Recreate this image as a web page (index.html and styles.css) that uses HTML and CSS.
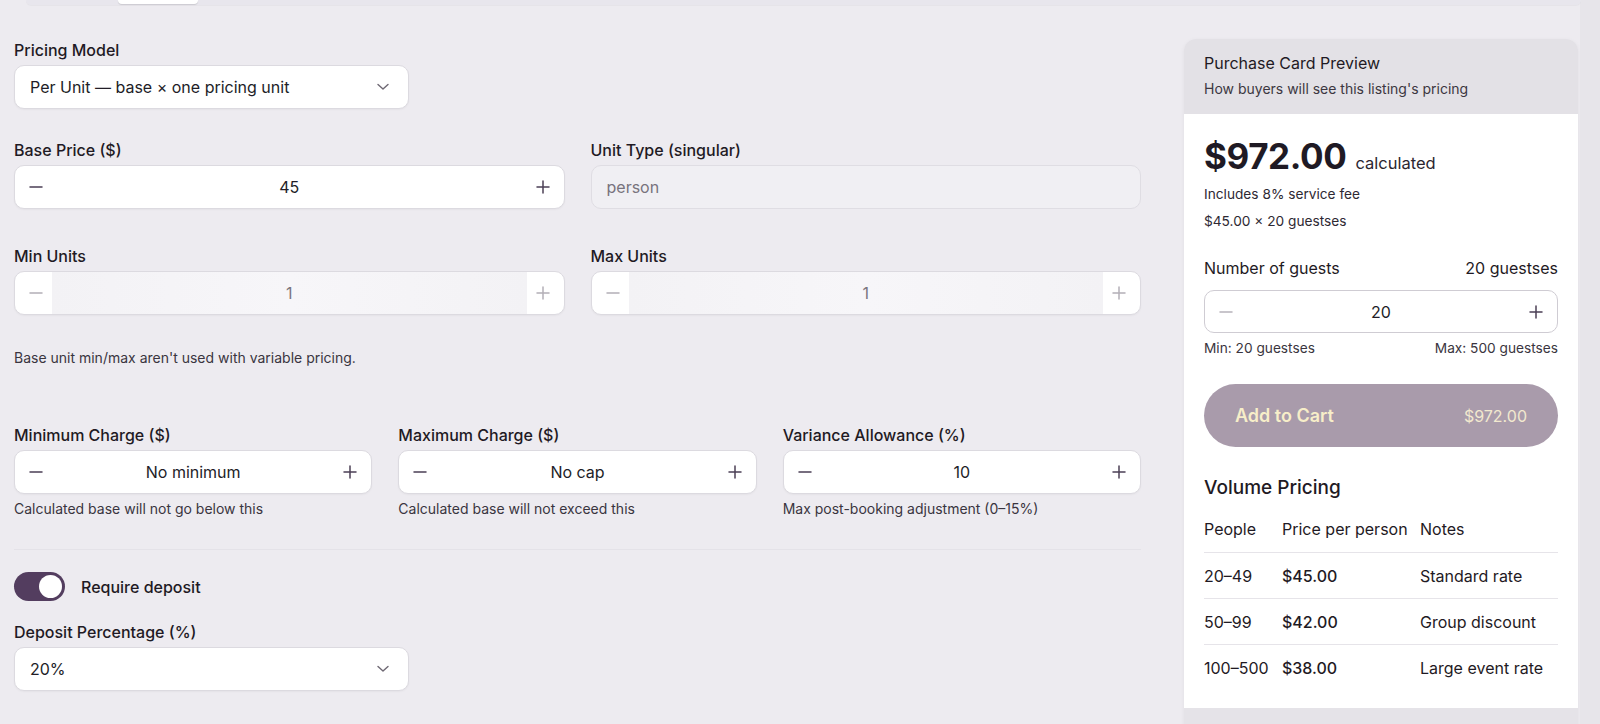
FILE: index.html
```html
<!DOCTYPE html>
<html lang="en">
<head>
    <meta charset="UTF-8">
    <meta name="viewport" content="width=device-width, initial-scale=1.0">
    <title>Pricing</title>
    <link rel="stylesheet" href="styles.css">
</head>
<body>
    <div class="page">
        <main class="editor">
            <div class="tabbar"><span class="tab-active"></span></div>

            <div class="field row-first">
                <label>Pricing Model</label>
                <div class="select">
                    <span>Per Unit — base × one pricing unit</span>
                    <svg class="chevron" width="12" height="8" viewBox="0 0 12 8"><polyline points="1,1.5 6,6 11,1.5" fill="none" stroke="#6e6873" stroke-width="1.4" stroke-linecap="round" stroke-linejoin="round"/></svg>
                </div>
            </div>

            <div class="grid-2 row-second">
                <div class="field">
                    <label>Base Price ($)</label>
                    <div class="stepper">
                        <button class="step"><svg width="14" height="14" viewBox="0 0 14 14"><line x1="1" y1="7" x2="13" y2="7" stroke="currentColor" stroke-width="1.5" stroke-linecap="round"/></svg></button>
                        <span class="value">45</span>
                        <button class="step"><svg width="14" height="14" viewBox="0 0 14 14"><line x1="1" y1="7" x2="13" y2="7" stroke="currentColor" stroke-width="1.5" stroke-linecap="round"/><line x1="7" y1="1" x2="7" y2="13" stroke="currentColor" stroke-width="1.5" stroke-linecap="round"/></svg></button>
                    </div>
                </div>
                <div class="field">
                    <label>Unit Type (singular)</label>
                    <div class="text-input disabled">person</div>
                </div>
            </div>

            <div class="grid-2 row-third">
                <div class="field">
                    <label>Min Units</label>
                    <div class="stepper disabled">
                        <button class="step"><svg width="14" height="14" viewBox="0 0 14 14"><line x1="1" y1="7" x2="13" y2="7" stroke="currentColor" stroke-width="1.5" stroke-linecap="round"/></svg></button>
                        <span class="value">1</span>
                        <button class="step"><svg width="14" height="14" viewBox="0 0 14 14"><line x1="1" y1="7" x2="13" y2="7" stroke="currentColor" stroke-width="1.5" stroke-linecap="round"/><line x1="7" y1="1" x2="7" y2="13" stroke="currentColor" stroke-width="1.5" stroke-linecap="round"/></svg></button>
                    </div>
                </div>
                <div class="field">
                    <label>Max Units</label>
                    <div class="stepper disabled">
                        <button class="step"><svg width="14" height="14" viewBox="0 0 14 14"><line x1="1" y1="7" x2="13" y2="7" stroke="currentColor" stroke-width="1.5" stroke-linecap="round"/></svg></button>
                        <span class="value">1</span>
                        <button class="step"><svg width="14" height="14" viewBox="0 0 14 14"><line x1="1" y1="7" x2="13" y2="7" stroke="currentColor" stroke-width="1.5" stroke-linecap="round"/><line x1="7" y1="1" x2="7" y2="13" stroke="currentColor" stroke-width="1.5" stroke-linecap="round"/></svg></button>
                    </div>
                </div>
            </div>

            <p class="note">Base unit min/max aren't used with variable pricing.</p>

            <div class="grid-3 row-charges">
                <div class="field">
                    <label>Minimum Charge ($)</label>
                    <div class="stepper">
                        <button class="step"><svg width="14" height="14" viewBox="0 0 14 14"><line x1="1" y1="7" x2="13" y2="7" stroke="currentColor" stroke-width="1.5" stroke-linecap="round"/></svg></button>
                        <span class="value">No minimum</span>
                        <button class="step"><svg width="14" height="14" viewBox="0 0 14 14"><line x1="1" y1="7" x2="13" y2="7" stroke="currentColor" stroke-width="1.5" stroke-linecap="round"/><line x1="7" y1="1" x2="7" y2="13" stroke="currentColor" stroke-width="1.5" stroke-linecap="round"/></svg></button>
                    </div>
                    <p class="help">Calculated base will not go below this</p>
                </div>
                <div class="field">
                    <label>Maximum Charge ($)</label>
                    <div class="stepper">
                        <button class="step"><svg width="14" height="14" viewBox="0 0 14 14"><line x1="1" y1="7" x2="13" y2="7" stroke="currentColor" stroke-width="1.5" stroke-linecap="round"/></svg></button>
                        <span class="value">No cap</span>
                        <button class="step"><svg width="14" height="14" viewBox="0 0 14 14"><line x1="1" y1="7" x2="13" y2="7" stroke="currentColor" stroke-width="1.5" stroke-linecap="round"/><line x1="7" y1="1" x2="7" y2="13" stroke="currentColor" stroke-width="1.5" stroke-linecap="round"/></svg></button>
                    </div>
                    <p class="help">Calculated base will not exceed this</p>
                </div>
                <div class="field">
                    <label>Variance Allowance (%)</label>
                    <div class="stepper">
                        <button class="step"><svg width="14" height="14" viewBox="0 0 14 14"><line x1="1" y1="7" x2="13" y2="7" stroke="currentColor" stroke-width="1.5" stroke-linecap="round"/></svg></button>
                        <span class="value">10</span>
                        <button class="step"><svg width="14" height="14" viewBox="0 0 14 14"><line x1="1" y1="7" x2="13" y2="7" stroke="currentColor" stroke-width="1.5" stroke-linecap="round"/><line x1="7" y1="1" x2="7" y2="13" stroke="currentColor" stroke-width="1.5" stroke-linecap="round"/></svg></button>
                    </div>
                    <p class="help">Max post-booking adjustment (0–15%)</p>
                </div>
            </div>

            <hr class="divider">

            <div class="toggle-row">
                <span class="toggle on"><span class="knob"></span></span>
                <span class="toggle-label">Require deposit</span>
            </div>

            <div class="field row-deposit">
                <label>Deposit Percentage (%)</label>
                <div class="select">
                    <span>20%</span>
                    <svg class="chevron" width="12" height="8" viewBox="0 0 12 8"><polyline points="1,1.5 6,6 11,1.5" fill="none" stroke="#6e6873" stroke-width="1.4" stroke-linecap="round" stroke-linejoin="round"/></svg>
                </div>
            </div>
        </main>

        <aside class="preview">
            <div class="card">
                <div class="card-header">
                    <div class="card-title">Purchase Card Preview</div>
                    <div class="card-subtitle">How buyers will see this listing's pricing</div>
                </div>
                <div class="card-body">
                    <div class="price-line">
                        <span class="price">$972.00</span>
                        <span class="price-tag">calculated</span>
                    </div>
                    <div class="fine">Includes 8% service fee</div>
                    <div class="fine second">$45.00 × 20 guestses</div>

                    <div class="guests-head">
                        <span>Number of guests</span>
                        <span>20 guestses</span>
                    </div>
                    <div class="stepper compact">
                        <button class="step muted"><svg width="14" height="14" viewBox="0 0 14 14"><line x1="1" y1="7" x2="13" y2="7" stroke="currentColor" stroke-width="1.5" stroke-linecap="round"/></svg></button>
                        <span class="value">20</span>
                        <button class="step"><svg width="14" height="14" viewBox="0 0 14 14"><line x1="1" y1="7" x2="13" y2="7" stroke="currentColor" stroke-width="1.5" stroke-linecap="round"/><line x1="7" y1="1" x2="7" y2="13" stroke="currentColor" stroke-width="1.5" stroke-linecap="round"/></svg></button>
                    </div>
                    <div class="limits">
                        <span>Min: 20 guestses</span>
                        <span>Max: 500 guestses</span>
                    </div>

                    <button class="cart-btn">
                        <span class="cart-label">Add to Cart</span>
                        <span class="cart-price">$972.00</span>
                    </button>

                    <h3 class="volume-title">Volume Pricing</h3>
                    <table class="volume">
                        <thead>
                            <tr><th class="c-people">People</th><th class="c-price">Price per person</th><th>Notes</th></tr>
                        </thead>
                        <tbody>
                            <tr><td>20–49</td><td class="amount">$45.00</td><td>Standard rate</td></tr>
                            <tr><td>50–99</td><td class="amount">$42.00</td><td>Group discount</td></tr>
                            <tr><td>100–500</td><td class="amount">$38.00</td><td>Large event rate</td></tr>
                        </tbody>
                    </table>
                </div>
                <div class="card-footer"></div>
            </div>
        </aside>

        <div class="rail"></div>
    </div>
</body>
</html>
```

FILE: styles.css
```css
body {
    margin: 0;
    font-family: Inter, "Noto Sans", sans-serif;
    background-color: #edebf0;
    color: #1f1a24;
    height: 724px;
    overflow: hidden;
}
.page {
    display: flex;
    padding-left: 14px;
}
.editor {
    flex: 1;
    min-width: 0;
}
.tabbar {
    height: 5px;
    margin-left: 12px;
    margin-right: -440px;
    background-color: #e8e6ed;
    border-radius: 0 0 8px 8px;
    box-shadow: 0 1px 1px rgba(0, 0, 0, 0.03);
    position: relative;
}
.tab-active {
    position: absolute;
    left: 92px;
    top: 0;
    width: 80px;
    height: 4px;
    background-color: #ffffff;
    border-radius: 0 0 8px 8px;
    box-shadow: 0 1px 1px rgba(0, 0, 0, 0.12);
}
.preview {
    width: 394px;
    margin-left: 43px;
    padding-top: 39px;
}
.rail {
    width: 20px;
    margin-left: 2px;
    height: 724px;
    background-color: #e7e5ea;
}

/* fields */
.field label {
    display: block;
    font-size: 16px;
    font-weight: 500;
    line-height: 20px;
    margin-bottom: 5px;
    color: #1f1a24;
}
.row-first {
    margin-top: 35px;
}
.row-second {
    margin-top: 31px;
}
.row-third {
    margin-top: 37px;
}
.row-charges {
    margin-top: 57px;
}
.row-deposit {
    margin-top: 21px;
}
.grid-2 {
    display: grid;
    grid-template-columns: 1fr 1fr;
    gap: 26px;
}
.grid-3 {
    display: grid;
    grid-template-columns: 1fr 1fr 1fr;
    gap: 26px;
}
.select {
    width: 395px;
    height: 44px;
    box-sizing: border-box;
    background-color: #ffffff;
    border: 1px solid #dcdae0;
    border-radius: 10px;
    box-shadow: 0 1px 2px rgba(0, 0, 0, 0.04);
    display: flex;
    align-items: center;
    justify-content: space-between;
    padding: 0 19px 0 15px;
    font-size: 16px;
    color: #221d27;
}
.stepper {
    height: 44px;
    box-sizing: border-box;
    background-color: #ffffff;
    border: 1px solid #dcdae0;
    border-radius: 10px;
    box-shadow: 0 1px 2px rgba(0, 0, 0, 0.04);
    display: flex;
    align-items: stretch;
    overflow: hidden;
}
.step {
    width: 42px;
    flex: none;
    border: none;
    background: none;
    padding: 0;
    display: flex;
    align-items: center;
    justify-content: center;
    color: #4b3f55;
}
.stepper .value {
    flex: 1;
    display: flex;
    align-items: center;
    justify-content: center;
    font-size: 16px;
    color: #221d27;
}
.stepper.disabled .step {
    color: #b3afb7;
    width: 37px;
    padding-left: 5px;
}
.stepper.disabled .step:last-child {
    padding-left: 0;
    padding-right: 5px;
}
.stepper.disabled .value {
    background: linear-gradient(90deg, #f3f2f5, #f7f6f9 50%, #f3f2f5);
    color: #7a757e;
}
.text-input {
    height: 44px;
    box-sizing: border-box;
    border: 1px solid #dfdde3;
    border-radius: 10px;
    display: flex;
    align-items: center;
    padding: 0 15px;
    font-size: 16px;
}
.text-input.disabled {
    background-color: #f0eff3;
    color: #78737d;
}
.note {
    margin: 33px 0 0;
    font-size: 14px;
    line-height: 20px;
    color: #3a3540;
}
.help {
    margin: 6px 0 0;
    font-size: 14px;
    line-height: 18px;
    color: #3a3540;
}
.divider {
    margin: 31px 0 0;
    border: none;
    border-top: 1px solid #e4e2e8;
}
.toggle-row {
    margin-top: 22px;
    display: flex;
    align-items: center;
    gap: 16px;
}
.toggle {
    width: 51px;
    height: 29px;
    box-sizing: border-box;
    border-radius: 15px;
    background-color: #533d5f;
    padding: 3px;
    display: flex;
    justify-content: flex-end;
}
.knob {
    width: 23px;
    height: 23px;
    border-radius: 50%;
    background-color: #ffffff;
}
.toggle-label {
    font-size: 16px;
    font-weight: 500;
}

/* preview card */
.card {
    border-radius: 12px 12px 0 0;
    overflow: hidden;
    box-shadow: 0 1px 4px rgba(0, 0, 0, 0.05);
}
.card-header {
    background-color: #e3e1e6;
    padding: 14px 20px 16px;
}
.card-title {
    font-size: 16px;
    line-height: 20px;
    color: #1f1a24;
}
.card-subtitle {
    margin-top: 7px;
    font-size: 14px;
    line-height: 18px;
    color: #3c3741;
}
.card-body {
    background-color: #ffffff;
    padding: 20px 20px 18px;
}
.price-line {
    display: flex;
    align-items: baseline;
    gap: 9px;
    height: 44px;
}
.price {
    font-size: 35px;
    font-weight: 700;
    line-height: 44px;
    letter-spacing: -0.4px;
}
.price-tag {
    font-size: 16.5px;
    color: #2b2630;
}
.fine {
    margin-top: 6px;
    font-size: 13.7px;
    line-height: 20px;
    color: #2e2933;
}
.fine.second {
    margin-top: 7px;
}
.guests-head {
    margin-top: 26px;
    display: flex;
    justify-content: space-between;
    font-size: 16px;
    line-height: 22px;
}
.stepper.compact {
    margin-top: 11px;
    height: 43px;
    border-color: #cfccd3;
    box-shadow: none;
}
.stepper.compact .step {
    width: 42px;
}
.step.muted {
    color: #b6b2ba;
}
.limits {
    margin-top: 6px;
    display: flex;
    justify-content: space-between;
    font-size: 13.7px;
    line-height: 18px;
    color: #3a3540;
}
.cart-btn {
    margin-top: 27px;
    width: 100%;
    height: 63px;
    border: none;
    border-radius: 32px;
    background-color: #a99bab;
    display: flex;
    align-items: center;
    justify-content: space-between;
    padding: 0 31px;
    font-family: inherit;
}
.cart-label {
    font-size: 18px;
    font-weight: 600;
    color: #f7eec9;
}
.cart-price {
    font-size: 16px;
    color: #f2e9cf;
}
.volume-title {
    margin: 29px 0 0;
    font-size: 19px;
    font-weight: 500;
    line-height: 24px;
}
.volume {
    margin-top: 6px;
    width: 100%;
    border-collapse: collapse;
    font-size: 16px;
}
.volume th {
    text-align: left;
    font-weight: 400;
    height: 46px;
    padding: 0;
    border-bottom: 1px solid #e6e4e9;
}
.volume td {
    height: 45px;
    padding: 0;
    border-bottom: 1px solid #e6e4e9;
}
.volume tbody tr:last-child td {
    border-bottom: none;
}
.c-people {
    width: 78px;
}
.c-price {
    width: 138px;
}
.amount {
    font-weight: 500;
}
.card-footer {
    height: 40px;
    background-color: #e5e3e8;
}
```
